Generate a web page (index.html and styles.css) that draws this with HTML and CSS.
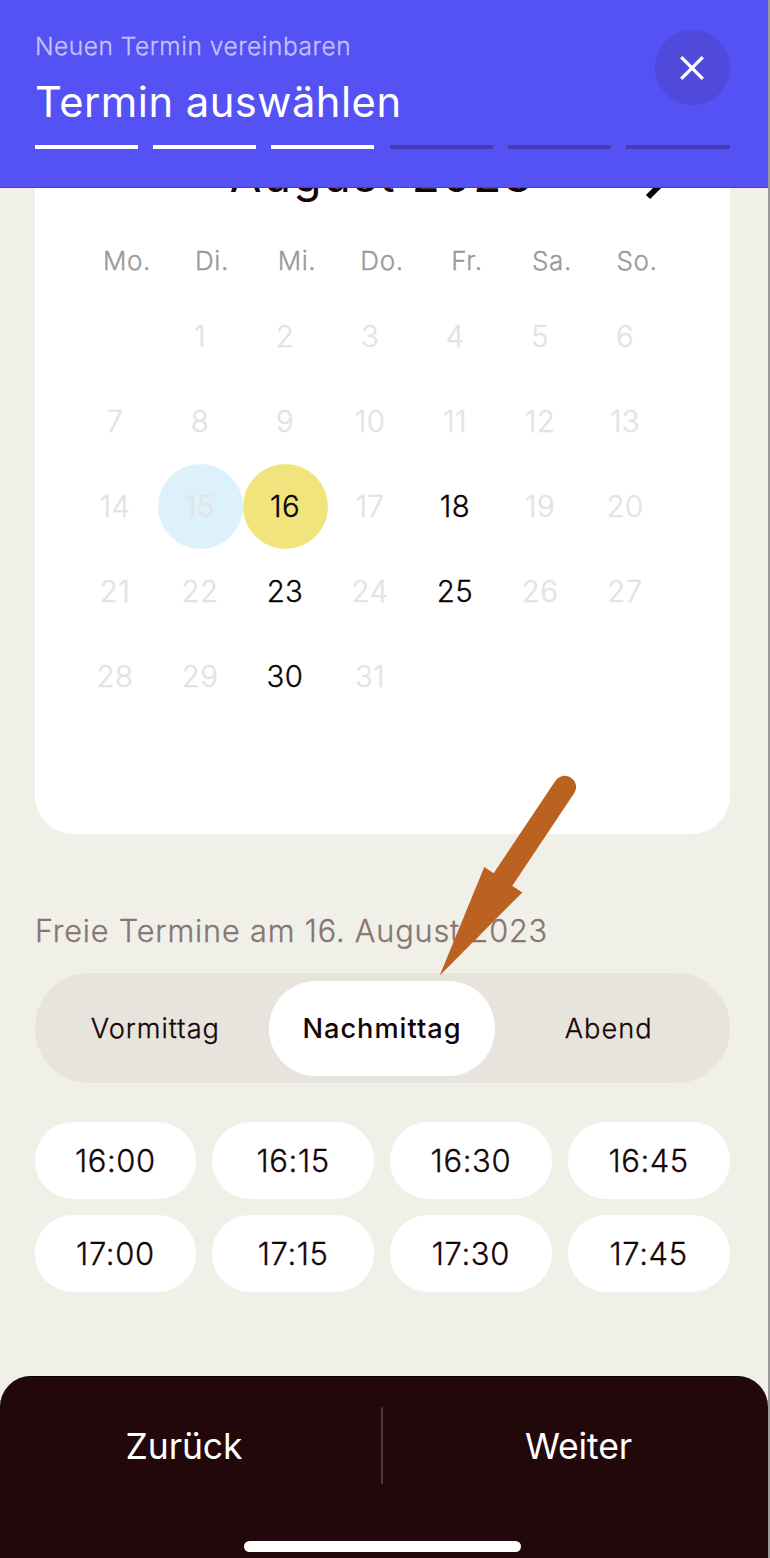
FILE: index.html
```html
<!DOCTYPE html>
<html lang="de">
<head>
<meta charset="utf-8">
<title>Termin auswählen</title>
<link rel="stylesheet" href="styles.css">
</head>
<body>
<div class="screen">
  <header class="header">
    <div class="header-row">
      <div class="titles">
        <div class="subtitle"><span>Neuen Termin vereinbaren</span></div>
        <h1 class="title"><span>Termin auswählen</span></h1>
      </div>
      <button class="close" aria-label="Schließen">
        <svg width="24" height="24" viewBox="0 0 24 24"><path d="M1.2 1.2 22.8 22.8M22.8 1.2 1.2 22.8" fill="none" stroke="#fff" stroke-width="3.300"/></svg>
      </button>
    </div>
    <div class="progress"><i class="done"></i><i class="done"></i><i class="done"></i><i></i><i></i><i></i></div>
  </header>

  <main class="content">
    <section class="card">
      <div class="month">
        <span class="month-name">August 2023</span>
        <svg class="next" width="24" height="40" viewBox="0 0 24 40"><path d="M3 3 20 20 3 37" fill="none" stroke="#0a0506" stroke-width="6"/></svg>
      </div>
      <div class="weekdays"><span>Mo.</span><span>Di.</span><span>Mi.</span><span>Do.</span><span>Fr.</span><span>Sa.</span><span>So.</span></div>
      <div class="days">
        <span></span><span>1</span><span>2</span><span>3</span><span>4</span><span>5</span><span>6</span>
        <span>7</span><span>8</span><span>9</span><span>10</span><span>11</span><span>12</span><span>13</span>
        <span>14</span><span class="today">15</span><span class="free selected">16</span><span>17</span><span class="free">18</span><span>19</span><span>20</span>
        <span>21</span><span>22</span><span class="free">23</span><span>24</span><span class="free">25</span><span>26</span><span>27</span>
        <span>28</span><span>29</span><span class="free">30</span><span>31</span>
      </div>
    </section>

    <h2 class="slots-title"><span>Freie Termine am 16. August 2023</span></h2>
    <div class="segment">
      <span>Vormittag</span><span class="active">Nachmittag</span><span>Abend</span>
    </div>
    <div class="slots">
      <span>16:00</span><span>16:15</span><span>16:30</span><span>16:45</span>
      <span>17:00</span><span>17:15</span><span>17:30</span><span>17:45</span>
    </div>
  </main>

  <footer class="footer">
    <div class="actions"><span class="back">Zurück</span><i class="divider"></i><span class="forward">Weiter</span></div>
    <div class="home"></div>
  </footer>

  <svg class="arrow" width="140" height="202" viewBox="0 0 140 202">
    <path d="M124.800 12 62 106" fill="none" stroke="#bc6220" stroke-width="22.500" stroke-linecap="round"/>
    <path d="M-.3 200.500 44.300 92 82.300 117.500Z" fill="#bc6220"/>
  </svg>
</div>
</body>
</html>
```
FILE: styles.css
```css
* { box-sizing: border-box; }
body {
  margin: 0;
  width: 770px;
  height: 1558px;
  overflow: hidden;
  background: #999;
  font-family: Inter, "Liberation Sans", sans-serif;
  font-weight: 300;
  color: #150507;
}
.screen {
  position: relative;
  display: flex;
  flex-direction: column;
  width: 768px;
  height: 1558px;
  background: #f0f0e9;
}
.subtitle, .weekdays, .days, .slots-title, .segment, .slots { -webkit-text-stroke: .3px currentColor; }
.header {
  position: relative;
  z-index: 1;
  height: 188px;
  padding: 30px 38.500px 0 34.500px;
  background: #5451f5;
  border-bottom: 1px solid #3f3bdc;
  color: #fff;
}
.header-row { display: flex; justify-content: space-between; height: 115px; }
.titles { padding-left: .5px; }
.subtitle { font-size: 24.500px; line-height: 32px; letter-spacing: .520px; color: #c5c2fb; }
.title { margin: 14px 0 0; font-size: 41.700px; line-height: 52px; letter-spacing: .500px; font-weight: 400; }
.close {
  display: flex;
  align-items: center;
  justify-content: center;
  width: 75px;
  height: 75px;
  padding: 0;
  border: 0;
  border-radius: 50%;
  background: #4f49dc;
}
.progress { display: grid; grid-template-columns: repeat(6, 1fr); gap: 15.300px; }
.progress i { height: 4px; background: #463bb0; }
.progress .done { background: #fff; }

.content { flex: 1; padding: 0 38.500px 0 34.500px; }
.card {
  height: 705px;
  margin-top: -59px;
  padding: 21px 38px 0;
  background: #fff;
  border-radius: 38px;
}
.month { position: relative; height: 50px; text-align: center; font-size: 46px; line-height: 50px; letter-spacing: 2.200px; font-weight: 400; white-space: nowrap; }
.next { position: absolute; right: 23px; top: 10px; }
.weekdays {
  display: grid;
  grid-template-columns: repeat(7, 85px);
  margin: 43px 0 0 12px;
  font-size: 26px;
  line-height: 36px;
  letter-spacing: .600px;
  text-align: center;
  color: #999;
}
.days { display: grid; grid-template-columns: repeat(7, 85px); grid-auto-rows: 85px; margin-top: 14.500px; font-size: 29.400px; letter-spacing: .4px; color: #e3e3e3; }
.days span { display: flex; align-items: center; justify-content: center; border-radius: 50%; }
.days .free { color: #080304; }
.days .today { background: #ddf1fd; color: #e3e3e3; }
.days .selected { background: #f2e47d; }

.slots-title { margin: 77px 0 0; padding-left: .5px; font-size: 30.700px; line-height: 40px; letter-spacing: .820px; font-weight: 300; color: #877573; white-space: nowrap; }
.segment {
  display: grid;
  grid-template-columns: repeat(3, 1fr);
  height: 110px;
  margin-top: 22px;
  padding: 7.500px;
  border-radius: 54px;
  background: #e7e4dd;
  font-size: 27.200px;
  letter-spacing: 1px;
}
.segment span { display: flex; align-items: center; justify-content: center; padding-top: 1px; border-radius: 47px; }
.segment .active { background: #fff; font-weight: 500; -webkit-text-stroke: 0; }
.slots { display: grid; grid-template-columns: repeat(4, 1fr); grid-auto-rows: 77px; gap: 16px; margin-top: 39px; font-size: 31px; letter-spacing: .600px; }
.slots span { display: flex; align-items: center; justify-content: center; border-radius: 38px; background: #fff; }

.footer {
  height: 182px;
  padding-top: 30px;
  border-top: 1px solid #080002;
  border-radius: 31px 31px 0 0;
  background: #23080b;
  color: #fff;
}
.actions { display: grid; grid-template-columns: 381px 2px 1fr; height: 77px; font-size: 35.500px; letter-spacing: -.100px; font-weight: 400; }
.actions span { display: flex; align-items: center; justify-content: center; padding-top: 2px; }
.back { padding-right: 13px; }
.forward { padding-left: 6px; }
.divider { background: #50393c; border-radius: 1px; }
.home { width: 277px; height: 11px; margin: 57px 0 0 244px; border-radius: 6px; background: #fff; }
.arrow { position: absolute; left: 440px; top: 775px; z-index: 2; }
```
